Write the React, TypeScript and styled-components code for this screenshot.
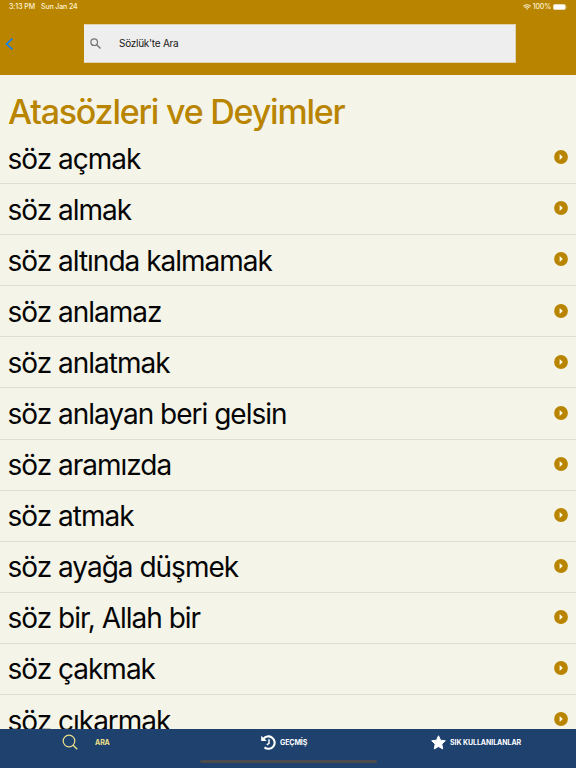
import React from 'react';
import styled, { createGlobalStyle } from 'styled-components';

const GlobalStyle = createGlobalStyle`
  * { box-sizing: border-box; }
  body { margin: 0; font-family: Inter, "Liberation Sans", sans-serif; }
`;

const Screen = styled.div`
  display: flex;
  flex-direction: column;
  width: 576px;
  height: 768px;
  overflow: hidden;
  background: #f4f4e8;
`;

const Header = styled.header`
  flex: none;
  height: 75px;
  background: #b98500;
`;

const StatusBar = styled.div`
  display: flex;
  justify-content: space-between;
  height: 24px;
  padding: 2px 9px 0;
  color: #fff3d6;
  font-size: 7px;
  line-height: 10px;
  font-weight: 500;
`;

const StatusGroup = styled.div<{ $gap: number }>`
  display: flex;
  align-items: center;
  gap: ${(p) => p.$gap}px;
  height: 10px;
  white-space: nowrap;
`;

const StatusText = styled.span<{ $spacing?: number }>`
  letter-spacing: ${(p) => p.$spacing ?? 0}px;
`;

const SearchRow = styled.div`
  display: flex;
  align-items: center;
  height: 39px;
`;

const BackButton = styled.button`
  display: flex;
  width: 84px;
  padding: 0 0 0 5px;
  border: 0;
  background: none;
`;

const SearchField = styled.label`
  display: flex;
  align-items: center;
  width: 432px;
  height: 39px;
  padding: 0 0 1px 5px;
  border: 1px solid #e0d2aa;
  border-left-color: #eee;
  background: #eee;
`;

const SearchText = styled.span`
  margin-left: 18px;
  color: #161616;
  font-size: 10px;
  line-height: 14px;
  letter-spacing: -0.25px;
`;

const Content = styled.main`
  flex: 1;
  min-height: 0;
  overflow: hidden;
`;

const Title = styled.h1`
  height: 58px;
  margin: 0;
  padding: 17px 0 0 8px;
  color: #b98500;
  font-size: 34px;
  line-height: 40px;
  font-weight: 500;
  letter-spacing: -1.22px;
  white-space: nowrap;
`;

const List = styled.ul`
  margin: 0;
  padding: 0;
  list-style: none;
`;

const Entry = styled.li`
  display: flex;
  justify-content: space-between;
  height: 51.1px;
  padding: 8px 8.5px 0 7.5px;
  border-bottom: 1px solid #dfdfd5;
  color: #050505;
`;

const EntryText = styled.span`
  margin-top: -0.5px;
  font-size: 28px;
  line-height: 36px;
  letter-spacing: -1px;
  white-space: nowrap;
`;

const EntryIcon = styled.svg`
  flex: none;
  width: 14px;
  height: 14px;
  margin-top: 9.3px;
`;

const TabBar = styled.nav`
  flex: none;
  display: flex;
  flex-direction: column;
  align-items: center;
  height: 39px;
  background: #1e416e;
`;

const Tabs = styled.div`
  display: grid;
  grid-template-columns: 199px 170px 207px;
  width: 100%;
  height: 31px;
`;

const Tab = styled.div<{ $pad: number; $gap: number; $active?: boolean }>`
  display: flex;
  align-items: center;
  gap: ${(p) => p.$gap}px;
  height: 27px;
  padding-left: ${(p) => p.$pad}px;
  color: ${(p) => (p.$active ? '#eee08a' : '#fff')};
`;

const TabLabel = styled.span<{ $spacing: number }>`
  font-size: 7px;
  line-height: 10px;
  font-weight: 700;
  letter-spacing: ${(p) => p.$spacing}px;
  white-space: nowrap;
`;

const HomeIndicator = styled.div`
  width: 177px;
  height: 3px;
  border-radius: 2px;
  background: #4b4b4d;
`;

const entries = [
  'söz açmak',
  'söz almak',
  'söz altında kalmamak',
  'söz anlamaz',
  'söz anlatmak',
  'söz anlayan beri gelsin',
  'söz aramızda',
  'söz atmak',
  'söz ayağa düşmek',
  'söz bir, Allah bir',
  'söz çakmak',
  'söz çıkarmak',
];

const WifiIcon = () => (
  <svg width="8" height="6" viewBox="0 0 8 6" fill="none" stroke="#fff8e6" strokeWidth="1.1">
    <path d="M.4 2.3a5.1 5.1 0 0 1 7.2 0M1.7 3.7a3.2 3.2 0 0 1 4.6 0" />
    <path d="M4 5.8 2.9 4.7a1.6 1.6 0 0 1 2.2 0z" fill="#fff8e6" stroke="none" />
  </svg>
);

const BatteryIcon = () => (
  <svg width="14" height="6" viewBox="0 0 14 6">
    <rect x=".25" y=".25" width="12.2" height="5.5" rx="1.6" fill="#fff" stroke="#e3cf99" strokeWidth=".5" />
    <path d="M13 2v2q.7-.3.7-1T13 2z" fill="#e3cf99" />
  </svg>
);

const BackIcon = () => (
  <svg width="9" height="12" viewBox="0 0 9 12" fill="none" stroke="#0f80f5" strokeWidth="1.7">
    <path d="M7.4.6 1.6 6l5.8 5.4" />
  </svg>
);

const FieldSearchIcon = () => (
  <svg width="11" height="11" viewBox="0 0 11 11" fill="none" stroke="#747474">
    <circle cx="4.2" cy="4.2" r="3.3" strokeWidth="1.2" />
    <path d="m6.7 6.7 3.8 3.8" strokeWidth="1.4" />
  </svg>
);

const PlayIcon = () => (
  <EntryIcon viewBox="0 0 14 14">
    <circle cx="7" cy="7" r="6.9" fill="#b98500" />
    <path d="M5.6 4v6l3.2-3z" fill="#fffbe9" />
  </EntryIcon>
);

const TabSearchIcon = () => (
  <svg width="16" height="17" viewBox="0 0 16 17" fill="none" stroke="currentColor" strokeWidth="1.2">
    <circle cx="7" cy="7" r="5.8" />
    <path d="m11.2 11.2 4 4" strokeWidth="1.4" />
  </svg>
);

const HistoryIcon = () => (
  <svg width="15" height="15" viewBox="0 0 15 15" fill="none" stroke="currentColor">
    <path d="M2.2 4.3A6.2 6.2 0 1 1 3.5 12.4" strokeWidth="2.1" />
    <path d="M.2.7v5.4h5.6z" fill="currentColor" stroke="none" />
    <path d="M8 4.2v4.2L5.8 9.8" strokeWidth="1.5" />
  </svg>
);

const StarIcon = () => (
  <svg width="15" height="15" viewBox="0 0 15 15" fill="currentColor">
    <path
      d="m7.5.8 2 4.4 4.8.6-3.5 3.3.9 4.8-4.2-2.4-4.2 2.4.9-4.8L.7 5.8l4.8-.6z"
      stroke="currentColor"
      strokeLinejoin="round"
    />
  </svg>
);

export default function App() {
  return (
    <>
      <GlobalStyle />
      <Screen>
        <Header>
          <StatusBar>
            <StatusGroup $gap={6}>
              <StatusText $spacing={-0.08}>3:13 PM</StatusText>
              <StatusText $spacing={-0.12}>Sun Jan 24</StatusText>
            </StatusGroup>
            <StatusGroup $gap={2}>
              <WifiIcon />
              <StatusText $spacing={-0.15}>100%</StatusText>
              <BatteryIcon />
            </StatusGroup>
          </StatusBar>
          <SearchRow>
            <BackButton aria-label="Geri">
              <BackIcon />
            </BackButton>
            <SearchField>
              <FieldSearchIcon />
              <SearchText>Sözlük'te Ara</SearchText>
            </SearchField>
          </SearchRow>
        </Header>
        <Content>
          <Title>Atasözleri ve Deyimler</Title>
          <List>
            {entries.map((entry) => (
              <Entry key={entry}>
                <EntryText>{entry}</EntryText>
                <PlayIcon />
              </Entry>
            ))}
          </List>
        </Content>
        <TabBar>
          <Tabs>
            <Tab $pad={62} $gap={17} $active>
              <TabSearchIcon />
              <TabLabel $spacing={-0.1}>ARA</TabLabel>
            </Tab>
            <Tab $pad={62} $gap={4}>
              <HistoryIcon />
              <TabLabel $spacing={-0.1}>GEÇMİŞ</TabLabel>
            </Tab>
            <Tab $pad={62} $gap={4}>
              <StarIcon />
              <TabLabel $spacing={-0.06}>SIK KULLANILANLAR</TabLabel>
            </Tab>
          </Tabs>
          <HomeIndicator />
        </TabBar>
      </Screen>
    </>
  );
}
